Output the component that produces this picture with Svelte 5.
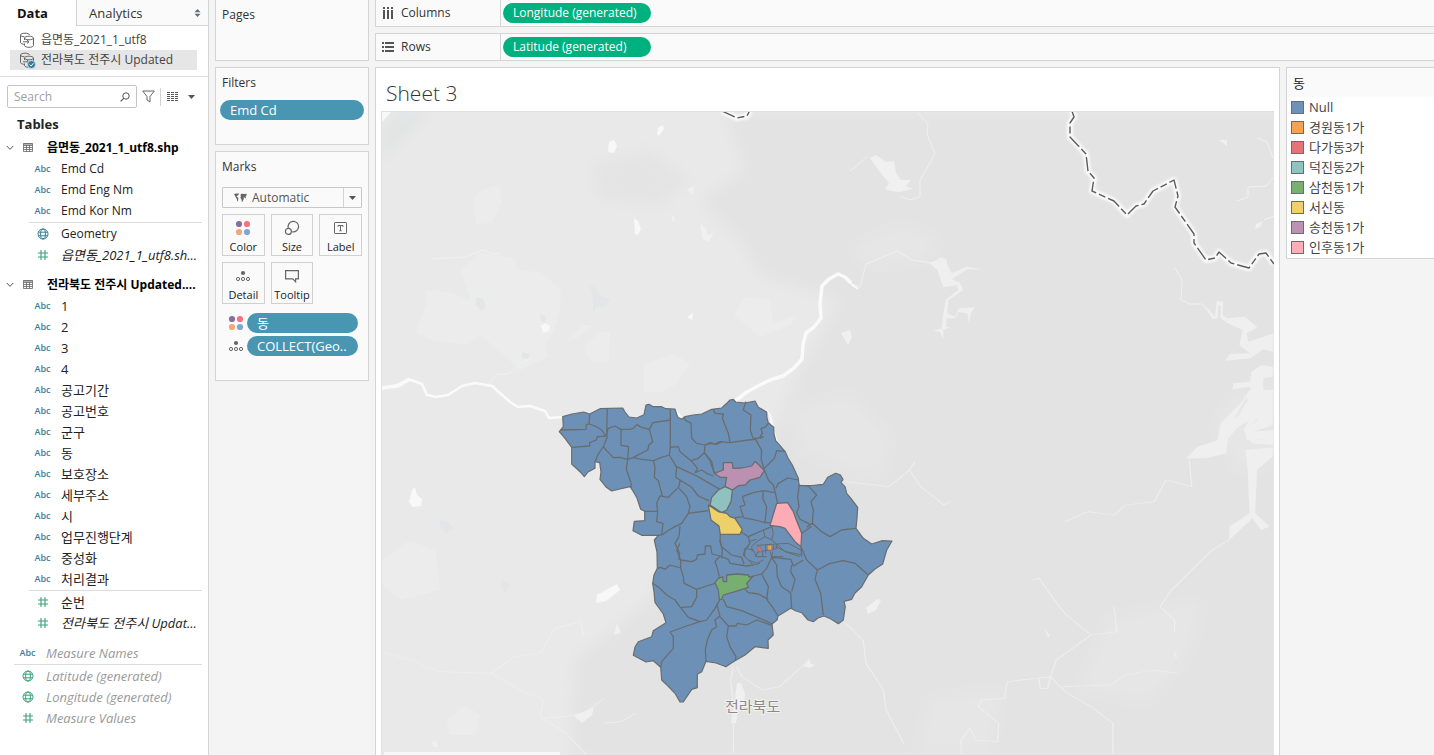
<script>
  const sources = [
    { name: '읍면동_2021_1_utf8', active: false },
    { name: '전라북도 전주시 Updated', active: true },
  ];

  const tables = [
    {
      name: '읍면동_2021_1_utf8.shp',
      dimensions: ['Emd Cd', 'Emd Eng Nm', 'Emd Kor Nm'],
      measures: [
        { kind: 'globe', tone: 'blue', name: 'Geometry' },
        { kind: 'hash', tone: 'green', name: '읍면동_2021_1_utf8.sh...', italic: true },
      ],
    },
    {
      name: '전라북도 전주시 Updated....',
      hangul: true,
      dimensions: ['1', '2', '3', '4', '공고기간', '공고번호', '군구', '동', '보호장소', '세부주소', '시', '업무진행단계', '중성화', '처리결과'],
      measures: [
        { kind: 'hash', tone: 'green', name: '순번' },
        { kind: 'hash', tone: 'green', name: '전라북도 전주시 Updat...', italic: true },
      ],
    },
  ];

  const generated = [
    { kind: 'globe', name: 'Latitude (generated)' },
    { kind: 'globe', name: 'Longitude (generated)' },
    { kind: 'hash', name: 'Measure Values' },
  ];

  const legend = [
    ['Null', '#6d91b8'],
    ['경원동1가', '#f5a252'],
    ['다가동3가', '#e67476'],
    ['덕진동2가', '#8fc3be'],
    ['삼천동1가', '#78b06f'],
    ['서신동', '#f0d169'],
    ['송천동1가', '#bd91b1'],
    ['인후동1가', '#ffadb6'],
  ];

  const third = 'scale(.33333)';
</script>

{#snippet globe()}
  <svg width="12" height="12" viewBox="0 0 12 12" fill="none" stroke="currentColor" aria-hidden="true">
    <circle cx="6" cy="6" r="5" /><ellipse cx="6" cy="6" rx="2.4" ry="5" /><path d="M1.5 4.2h9M1.5 7.8h9" />
  </svg>
{/snippet}

{#snippet hash()}
  <svg width="12" height="12" viewBox="0 0 12 12" fill="none" stroke="currentColor" stroke-width="1.1" aria-hidden="true">
    <path d="M4 1v10M8 1v10M1 4h10M1 8h10" />
  </svg>
{/snippet}

{#snippet fourDots()}
  <svg width="16" height="16" viewBox="0 0 16 16" aria-hidden="true">
    <circle cx="4" cy="4" r="3.1" fill="#8a7099" /><circle cx="12" cy="4" r="3.1" fill="#f9717f" />
    <circle cx="4" cy="12" r="3.1" fill="#f4a77c" /><circle cx="12" cy="12" r="3.1" fill="#82a6d0" />
  </svg>
{/snippet}

{#snippet detailDots()}
  <svg width="16" height="16" viewBox="0 0 16 16" aria-hidden="true">
    <circle cx="8" cy="5" r="2.1" fill="#666" />
    <g fill="none" stroke="#666"><circle cx="3" cy="11" r="1.6" /><circle cx="8" cy="11" r="1.6" /><circle cx="13" cy="11" r="1.6" /></g>
  </svg>
{/snippet}

<div class="workbook">
  <aside class="side">
    <div class="tabs">
      <button class="tab current">Data</button>
      <button class="tab">
        Analytics
        <svg width="7" height="8" viewBox="0 0 7 8" fill="#666b7a" aria-hidden="true"><path d="M3.5 0 6.5 3.2h-6zM.5 4.8h6L3.5 8z" /></svg>
      </button>
    </div>

    <ul class="sources">
      {#each sources as s}
        <li class:active={s.active}>
          <svg width="18" height="17" viewBox="0 0 18 17" fill="none" stroke="#666" aria-hidden="true">
            <path d="M6 12.5c-2.500-.3-4.500-1-4.500-2V3c0-1 2-1.800 4.500-1.800s4.500.8 4.500 1.800M1.500 3c0 1 1.800 1.700 4 1.800" />
            <path d="M5.500 8V6c0-1 2-1.800 4.500-1.800S14.500 5 14.500 6v7.500c0 1-2 1.800-4.500 1.800S5.500 14.500 5.500 13.500v-2M5.500 6c0 1 2 1.800 4.500 1.800s4.500-.8 4.500-1.800M4 9.800h5.500M8 8l2 1.800-2 1.800" />
            {#if s.active}
              <circle cx="12.500" cy="12.500" r="4" fill="#2f7ea3" stroke="#e6e6e6" stroke-width=".8" />
              <path d="m10.700 12.600 1.400 1.400 2.400-2.800" stroke="#fff" />
            {/if}
          </svg>
          <span>{s.name}</span>
        </li>
      {/each}
    </ul>

    <div class="tools">
      <label class="search">
        <input type="text" placeholder="Search" aria-label="Search" />
        <svg width="10" height="10" viewBox="0 0 10 10" fill="none" stroke="#555" aria-hidden="true"><circle cx="6" cy="4" r="3.200" /><path d="M3.700 6.300.6 9.400" stroke-width="1.200" /></svg>
      </label>
      <button aria-label="Filter fields">
        <svg width="13" height="13" viewBox="0 0 13 13" fill="none" stroke="#666" aria-hidden="true"><path d="M.7 1h11.600L8 6.500V12L5 10V6.500z" /></svg>
      </button>
      <button class="view" aria-label="View options">
        <svg width="12" height="10" viewBox="0 0 12 10" stroke="#555" aria-hidden="true"><path d="M0 .5h12M0 2.500h12M0 4.500h12M0 6.500h12M0 8.500h12" stroke-dasharray="3 1" /></svg>
        <svg width="7" height="4" viewBox="0 0 7 4" fill="#555" aria-hidden="true"><path d="M0 0h7L3.500 4z" /></svg>
      </button>
    </div>

    <h2>Tables</h2>

    {#each tables as t}
      <section class="table" class:hangul={t.hangul}>
        <h3>
          <svg width="8" height="6" viewBox="0 0 8 6" fill="none" stroke="#555" aria-hidden="true"><path d="m.8 1 3.200 3.400L7.200 1" /></svg>
          <svg width="10" height="9" viewBox="0 0 10 9" fill="none" stroke="#666" aria-hidden="true"><path d="M.5.5h9v8h-9zM.5 2.500h9M.5 4.500h9M.5 6.500h9M3.500 2v6.500M6.500 2v6.500" stroke-width=".8" /><path d="M.5 1h9" /></svg>
          <span>{t.name}</span>
        </h3>
        <ul>
          {#each t.dimensions as d}
            <li><i class="abc">Abc</i><span>{d}</span></li>
          {/each}
        </ul>
        <ul class="ruled">
          {#each t.measures as m}
            <li>
              <i class={m.tone}>{#if m.kind === 'globe'}{@render globe()}{:else}{@render hash()}{/if}</i>
              <span class:italic={m.italic}>{m.name}</span>
            </li>
          {/each}
        </ul>
      </section>
    {/each}

    <section class="table loose">
      <ul><li><i class="abc">Abc</i><span class="italic">Measure Names</span></li></ul>
      <ul class="ruled">
        {#each generated as g}
          <li>
            <i class="green">{#if g.kind === 'globe'}{@render globe()}{:else}{@render hash()}{/if}</i>
            <span class="italic">{g.name}</span>
          </li>
        {/each}
      </ul>
    </section>
  </aside>

  <div class="cards">
    <section class="card pages"><h4>Pages</h4></section>
    <section class="card filters">
      <h4>Filters</h4>
      <button class="pill blue-pill">Emd Cd</button>
    </section>
    <section class="card marks">
      <h4>Marks</h4>
      <div class="mark-type">
        <svg class="world" width="13" height="10" viewBox="0 0 13 10" fill="#666" aria-hidden="true"><path d="M0 1l2-.6 3 .2-.5 1.200L3.200 3l-.7.600L4.500 5 4 7.500l-.8 1.300L2.800 6 1.600 4 .8 2.400zM6.500 1.500 8 .5l1 .6L12.500.8l.2 1.500-1 .8.200 1.900-1 .3-.7-1.300-.8.300.6 1-1.200 3-.9.600-.4-2.500L6.500 5l.3-1.700z" /></svg>
        <select aria-label="Mark type"><option>Automatic</option></select>
        <svg class="caret" width="7" height="4" viewBox="0 0 7 4" fill="#555" aria-hidden="true"><path d="M0 0h7L3.500 4z" /></svg>
      </div>
      <div class="shelf-buttons">
        <button>{@render fourDots()}Color</button>
        <button>
          <svg width="16" height="16" viewBox="0 0 16 16" fill="none" stroke="#666" stroke-width="1.200" aria-hidden="true"><path d="M4.300 8.300A5.300 5.300 0 1 1 8.200 11.800" /><circle cx="4.400" cy="11.400" r="3" /></svg>
          Size
        </button>
        <button>
          <svg width="16" height="16" viewBox="0 0 16 16" fill="none" stroke="#666" aria-hidden="true"><rect x="1.500" y="2.500" width="12" height="11" rx=".6" /><path d="M5 6.800V5.500h5v1.300M7.500 5.500v5.300M6.300 10.700h2.400" /></svg>
          Label
        </button>
        <button>{@render detailDots()}Detail</button>
        <button>
          <svg width="16" height="16" viewBox="0 0 16 16" fill="none" stroke="#666" stroke-width="1.200" aria-hidden="true"><path d="M1.600 2.600h12.800v8.200h-2.800v3L8.800 10.800H1.600z" /></svg>
          Tooltip
        </button>
      </div>
      <div class="encoding">{@render fourDots()}<button class="pill blue-pill">동</button></div>
      <div class="encoding">{@render detailDots()}<button class="pill blue-pill">COLLECT(Geo..</button></div>
    </section>
  </div>

  <main>
    <div class="shelf columns">
      <h4>
        <svg width="12" height="12" viewBox="0 0 12 12" fill="#555" aria-hidden="true"><path d="M1 0h2v2H1zM5 0h2v2H5zM9 0h2v2H9zM1 3h2v9H1zM5 3h2v9H5zM9 3h2v9H9z" /></svg>
        Columns
      </h4>
      <button class="pill green-pill">Longitude (generated)</button>
    </div>
    <div class="shelf">
      <h4>
        <svg width="12" height="12" viewBox="0 0 12 12" fill="#555" aria-hidden="true"><path d="M0 1h2v2H0zM0 5h2v2H0zM0 9h2v2H0zM3 1h9v2H3zM3 5h9v2H3zM3 9h9v2H3z" /></svg>
        Rows
      </h4>
      <button class="pill green-pill">Latitude (generated)</button>
    </div>

    <div class="canvas">
      <section class="sheet">
        <h1>Sheet 3</h1>
        <div class="map">
          <svg viewBox="382 112 892 643" preserveAspectRatio="xMinYMin slice" role="img" aria-label="Map of districts">
            <defs>
              <filter id="soft" x="-20%" y="-20%" width="140%" height="140%"><feGaussianBlur stdDeviation="7" /></filter>
              <filter id="halo" x="-10%" y="-10%" width="120%" height="120%"><feGaussianBlur stdDeviation="1.200" /></filter>
            </defs>
            <rect x="382" y="112" width="892" height="643" fill="#e9e9e9" />

            <!-- terrain shading -->
            <g filter="url(#soft)">
              <path d="M725 112H1300V760H570L575 660 650 600 700 480 770 440 800 370 840 300 760 275 740 240 700 200 745 170z" fill="#e3e3e3" />
              <path d="M592 165 650 150 690 180 660 205 600 200z" fill="#e4e4e4" />
              <path d="M382 160 430 112H395L382 130z" fill="#e2e3e3" />
              <path d="M790 410 850 395 890 440 880 475 850 470 805 450zM850 250 900 225 940 240 920 260 870 265zM1080 690 1110 620 1200 600 1190 650 1150 700zM930 700 1000 690 990 750 920 750z" fill="#e6e6e6" />
              <path d="M1215 430 1230 400 1274 380V460L1240 470z" fill="#e6e6e6" />
            </g>

            <!-- woodland patches -->
            <g fill="#ececec">
              <path d="M477 192 499 185 502 202 492 222 476 225 474 200zM461 270 480 253 515 258 517 270 540 272 561 290 560 310 552 335 545 345 548 357 520 370 498 350 480 335 466 345 430 340 416 333 426 304 426 290 450 292 470 300z" />
              <path d="M567 340 583 325 593 325 578 338zM584 346 600 332 610 332 609 362 592 363zM644 364 675 354 690 364 675 385 662 392 644 392zM734 315 745 297 770 300 773 323 798 315 790 325 760 337z" />
              <path d="M382 560 410 540 435 550 440 590 400 600 382 585zM446 720 465 705 480 715 475 735 450 735z" />
            </g>
            <g fill="#e3e6e6">
              <path d="m590 285 6 3 4 8 10 3-4 7-10 1-3 7V297zM476 297l7 2 3 6-4 6-6-6zM400 113l12 2-2 8-8 5zM439 520l10 2 4 6-6 5-6-4zM502 580l8 4-4 9-6-8z" />
              <path d="M522 352l8 2-2 5-6-1zM540 314l6 3-1 6-4-2z" />
            </g>

            <!-- lakes -->
            <g fill="#f8f8f8">
              <path d="m658 128 5-3 1 4-5 7-2-2zM609 142l5-2 3 6-3 7-6-1zM634 218l4 3 3 8-3 6-3-1zM541 326l4-3 5 3-1 5-6 2zM687 317l6-4-1 7zM412 490l3-3 2 8 5 4-1 7-8 1-4-5zM597 595l20-11 3 6-14 11-10 2zM382 112h9l-9 10z" />
            </g>
            <g fill="#f0f0f0">
              <path d="m700 223 6 6 2 6 6-2-6 9-6-4zM671 214l4 4-2 5zM687 189l7-3-1 9zM841 333l9-3 2 7-4 8zM870 158l6-3 10 7 8-1 2 12 5 7 10 0-5 6 7 3-14 3-8-1-6-2 4-6-10-12z" />
              <path d="M1219 140h8v6zM1256 224l7-3-3 6-5 2zM803 666l6-7 2 5 4 1-5 3zM866 608l11-9 4 1-5 10-8 4zM737 683l4 0 4 10-1 10-6 8-2 12-5 0 4-25zM574 716l20-9-2 8-10 8zM614 635l3-12 4 10zM431 742l5-1 2 6-4 0zM1044 628l6 8-2 1zM1174 650l3 8-3-2z" />
            </g>

            <!-- reservoir in the north-east -->
            <g transform="translate(850 100) {third}" fill="#efefef">
              <path d="M238 490 275 472 290 480 292 495 305 520 350 500 398 508 352 508 305 538 330 548 340 570 295 600 292 640 315 650 325 625 375 622 362 640 358 672 352 640 325 636 315 655 290 655 288 680 298 682 280 690 280 718 270 696 250 692 275 685 280 640 288 598 325 570 320 556 280 562 262 510z" />
              <path d="M1065 615 1095 650 1100 602 1120 605 1118 645 1130 655 1185 650 1222 682 1190 700 1195 725 1270 700V755L1240 748 1200 775 1125 782 1140 762 1200 760 1168 735 1178 690 1130 668 1112 655 1112 618 1105 615 1103 655 1088 658z" />
              <path d="M1270 802 1235 795 1205 815 1200 845 1150 850 1148 868 1200 860 1205 890 1180 920 1168 945 1140 965 1118 978 1128 1000 1105 1000 1130 1020 1165 980 1200 960 1215 940 1222 960 1185 990 1190 1020 1270 1018 1270 990 1210 995 1268 975 1268 935 1240 890 1240 835 1268 830z" />
            </g>
            <g transform="translate(376 390) scale(.57654 .33333)" fill="#efefef">
              <path d="M1515 0H1556V60L1530 80 1512 120 1530 150 1556 145V165L1520 160 1505 120 1520 70 1510 20 1480 110 1475 190 1440 205 1405 205 1425 170 1460 150 1465 100 1500 40zM1508 180 1556 172 1555 200 1528 240 1525 370 1550 410 1535 420 1520 385 1480 450 1480 410 1515 370 1512 240z" />
            </g>

            <!-- streams -->
            <g fill="none" stroke="#f1f1f1" stroke-width="1">
              <path d="M431 259 465 257 483 250 493 254 500 253M488 385 497 374H509L520 364 531 358M850 171 868 156M918 113 928 124 927 134 935 154 920 180V197L910 200 900 196M850 283 860 287 866 264 897 251 912 260 933 263M1175 268 1182 280 1181 300 1190 304 1202 304 1213 318M1257 138 1267 142 1273 158M1237 201 1248 197V187L1266 186 1273 178M1274 216 1264 220" />
            </g>
            <g transform="translate(376 390) scale(.57654 .33333)" fill="none" stroke="#efefef" stroke-width="2">
              <path d="M10 785 60 810 110 845 200 850 240 800 285 790 310 715 355 695 360 740M200 850 250 900 290 930 285 980 330 1030 365 1095M285 985 330 980 365 965 395 925M395 1000 425 995 450 970M620 830 615 870 620 950 620 1090M625 830 635 860 670 900 700 890 745 820M815 700 845 750 850 820 880 900 885 960 915 1060M815 275 890 290 925 240 935 215M925 240 945 290 985 345 995 335M1195 395 1235 365 1280 375 1300 345 1350 335 1370 270 1415 290 1410 200M1480 450 1450 480 1380 600 1360 650 1385 690V725M1135 570 1150 565 1185 650 1195 670 1215 700 1240 735 1285 725 1280 650M1240 735 1180 810 1170 860 1095 875 1090 925 1050 930 1045 950 1080 1000 1078 1055 1040 1050 1030 1015 1015 1050 1015 1090M1170 860 1195 905 1240 950 1278 1000 1278 1090M1190 890 1275 885 1300 855 1345 840 1390 850M1150 865 1152 895 1165 895 1170 860" />
            </g>

            <!-- rivers -->
            <g fill="none" stroke="#fafafa" stroke-width="3.500" stroke-linejoin="round">
              <path d="M382 388 398 385 408 379 422 384 427 395 436 397 448 395 462 386 475 383 492 386 501 394 510 402 518 407 530 406 545 411 549 418 563 417" stroke-width="2.500" />
              <path d="M382 388 398 386 410 379M735 401 747 392 758 386 770 380 783 376 794 368 802 359 803 345 806 333 814 327 821 318 820 303 822 286 829 279 838 274 845 277 851 283" />
              <path d="M851 284 858 289M800 484 776 440 770 415 766 410M675 410 681 417" stroke-width="2" />
            </g>

            <!-- provincial boundary -->
            <g fill="none" stroke-linejoin="round">
              <g stroke="#fafafa" stroke-width="6" filter="url(#halo)">
                <path d="M722 111 737 118 747 116 750 110" />
                <path d="M1072 111 1074 117 1070 123V137L1086 154 1088 171 1094 178 1092 191 1114 201 1127 215 1136 206 1144 204 1153 191 1174 180 1178 196 1175 207 1194 234V243L1206 260 1215 258 1219 252 1231 263 1249 268 1259 254 1266 253 1274 264" />
              </g>
              <g stroke="#5c5c5c" stroke-width="1.400" stroke-dasharray="14 3 7 3">
                <path d="M722 111 737 118 747 116 750 110" />
                <path d="M1072 111 1074 117 1070 123V137L1086 154 1088 171 1094 178 1092 191 1114 201 1127 215 1136 206 1144 204 1153 191 1174 180 1178 196 1175 207 1194 234V243L1206 260 1215 258 1219 252 1231 263 1249 268 1259 254 1266 253 1274 264" />
              </g>
            </g>

            <!-- city outline -->
            <path
              fill="#6d90b6" stroke="#686d70" stroke-width="1.200" stroke-linejoin="round"
              d="M562.700 416.700 572 414 583.700 412 589.700 414 600 408.700 622.700 408 625 412 629 417 636.700 418 644 414.700 646 405 649 404.300 653.300 406.700 661.700 406.700 665.700 408.700 675 409 677.700 417.300 681.700 419.300 685 416.700 693 415 701.700 414 711.700 409.300 721.700 408 726.700 403.300 730 400 733.300 399.300 735.700 402 745 403 755 401 758.300 407.300 766.700 412 767 418 768.300 422.700 773.700 427.300 774 434 775.700 440.700 785 451.300 788 458 792.300 465 798.300 478.300 799.300 485.300 812 485.500 823.300 484.300 827.700 477.300 835.700 473.300 840 474.700 843 479.300 841 482.700 845 486.700 846.700 493.300 851.700 499.300 857.700 507.300 857 518 856 528.300 863.300 538.300 871.700 544 881.700 540.700 892 541 886.700 550 882.700 564 875 569 868.300 575 861.700 586.700 855 593 851.700 599.300 844 601.300 845.300 606.700 843.300 620 838.300 623.700 831 619 824 616 818 618 813.300 621.700 808 620 801.700 612.700 796 611 790.700 608.300 778 616 777 620 772 624 773.300 635 768 640 768.300 648.300 755 646.700 745 655 735 660.700 731 663.300 726 666.700 716 663 706 661.300 701.700 671.700 697.300 674.300 697.300 687.700 691.700 689.300 683.300 702 680 702 675 693.300 668 686 661.700 680 660.700 667.300 653.300 660.700 646 662 633.300 655.300 635 647 638.300 641.700 651.700 636.700 653.300 630.700 666 622.700 663.300 614 655 602.300 654 592 652.700 583.300 654 575 657.300 568.300 657 552 654.300 540 658.300 535.300 641.700 535.300 633 530.700 634.300 521.300 644.700 520.700 644.700 511.300 640.700 509.300 637 498 632.300 490 630 486.700 620 489 611.700 491 606 487 600 479.300 601 472 599.700 462.700 595 461.700 595 468.300 588 472 584.300 476.700 580 471.700 571.700 464 571.700 447.300 565 438.300 559.300 431.700 563.300 426.700z"
            />

            <!-- inner district borders -->
            <g fill="none" stroke="#686d70" stroke-width="3.800" stroke-linejoin="round">
              <g transform="translate(545 390) {third}">
                <path d="M46 120 123 118 124 104 132 102 134 72M132 102 150 108 170 120 180 134 187 138M80 172 134 168V158L154 150 157 140 188 138M187 55 185 138 189 115 210 108 228 118 252 118 265 115 275 104 290 112 313 118 324 98 376 90M228 118V166L251 170 248 208M313 118 323 155 312 165 308 180 265 202M376 57V172L373 195 350 202 325 212 290 208 265 203 248 208 225 202 205 203 185 182 175 170 187 140M175 170 160 192 150 215M248 208 244 238 257 275 260 292M325 212 330 230 328 262 340 272 352 318M376 172 400 170 405 185 438 212 458 235 450 248" />
                <path d="M373 195 395 232 392 262 405 270 402 290 370 322 345 318 335 340 338 364 299 364M395 230 420 242 450 255 525 298M405 270 440 292 460 318 492 332M402 295 425 320 435 350 430 370 410 400 380 415 354 433 340 436M338 364 335 395 354 400 350 436M430 370 460 366 490 362M418 80 420 90 438 100 440 145 455 160 480 165 478 188 460 205 438 212M480 165 500 160 515 163 530 156M478 188 495 212 505 242 508 250M450 248 470 240 485 250 505 258M405 408 402 440 390 460 404 490 402 510" />
              </g>
              <g transform="translate(705 390) {third}">
                <path d="M25 58 30 70 55 72 52 85 62 110 70 130 75 158M0 165 15 158 30 162 45 155 75 158 130 150 152 148 148 142M122 35 115 60 138 75 136 120 145 148 175 140 165 145M190 100 180 112 168 115 172 130 162 145M152 148 170 182 168 205 178 240 190 270 205 285 210 305 218 340M240 184 215 182 208 205 178 235M0 190 20 215 28 250M212 295 220 280 248 264 280 270M112 320 145 308 175 302 210 308M112 320 120 345 105 350 115 380 90 383M175 302 173 325 185 350 180 398 150 390 115 384M180 398 198 398M283 286 278 320 282 350 275 368 285 388 310 400 318 410 290 430M283 286 310 288 335 315 318 335 325 360 322 400 350 425 375 440 410 420 453 415M322 400 305 412M288 470 290 500M46 434 45 455 52 480 50 505M108 425 130 440 175 420 200 410M130 440 135 460 120 480 118 500" />
                <path stroke-width="3" d="M175 420 180 440 155 455 140 470 142 485M200 408 205 430 200 450 215 462 250 460 288 480M180 440 200 450M155 466 215 462V476L158 486M182 465V490M207 465 204 480M173 485V500M215 462 240 485 285 500M160 486 150 500M130 455 155 448M195 484 200 500 235 500" />
              </g>
              <g transform="translate(620 540) {third}">
                <path d="M112 85 122 82 135 88 150 75 182 84 182 60 170 30 180 10M182 60 215 65 230 58 232 45 255 42 256 18 272 18 276 42 300 48 285 65 292 85 298 110M182 84 190 110 192 130 230 148 230 172 215 200 182 203 165 180 140 165 120 145 98 130M182 203 205 232 240 245 260 240 285 205 300 178M230 148 260 138 285 130M300 48 325 58 330 70 380 78 400 75M300 0 305 20 335 45 365 52 372 72M310 178 320 200 365 212 420 235 458 252M290 190 300 230 325 258 348 258 352 250 380 255 410 240 456 256M325 258 320 290 330 320 348 350 345 362M300 228 285 240 290 260 275 270 262 300 256 330 258 364M240 245 200 258 150 276 160 290 160 325 125 365 122 382M375 148 385 158 415 162 445 178M400 108 425 102 440 85 455 52M425 102 445 140 440 178 460 205 474 228M455 52 470 75 472 110 485 140 512 158 515 205M515 75 512 95 525 118 515 155M455 52 512 58 520 78 550 60M545 25 560 60 592 90 585 118 602 160 610 225M592 90 630 70 670 62 705 70 745 105" />
                <path stroke-width="3" d="M370 45 385 60 410 70 430 60M400 30 410 50 440 50M385 60 400 75 420 70M370 45 375 25 400 30M458 34 455 52M465 20 500 35 545 45" />
              </g>
            </g>

            <!-- highlighted districts -->
            <g stroke="#686d70" stroke-width="3.800" stroke-linejoin="round">
              <g transform="translate(705 390) {third}">
                <path fill="#bb90b1" d="M28 250 55 240V218L82 218 84 235 110 234 140 228 150 214 165 228 178 242 165 262 135 270 120 285 100 287 82 300 60 290 65 262 45 262z" />
                <path fill="#8fc2bf" d="M60 290 82 300 78 335 65 360 50 368 15 345 20 322 40 300z" />
                <path fill="#edd069" d="M10 345 42 366 65 370 75 380 90 385 112 418 105 433 46 433 42 408 18 390z" />
                <path fill="#fdabb5" d="M215 340 248 338 265 365 272 385 290 430 288 470 270 455 240 415 225 410 195 406z" />
                <path fill="#f2a04c" d="M188 466h12v14h-12z" stroke-width="1" />
                <path fill="#e46c6c" d="M157 470 166 470 170 486 160 484z" stroke-width="1" />
              </g>
              <g transform="translate(620 540) {third}">
                <path fill="#77af70" d="M285 128 295 115 308 110 310 125 320 125 320 105 350 102 385 105 388 112 400 108 380 130 385 142 345 155 310 165 305 178 298 178 295 150z" />
              </g>
            </g>

            <text x="725" y="712" class="place">전라북도</text>
            <rect x="384" y="752" width="176" height="3" fill="#f7f7f7" />
          </svg>
        </div>
      </section>

      <section class="legend">
        <h4>동</h4>
        <ul>
          {#each legend as [name, color]}
            <li><b style="background:{color}"></b>{name}</li>
          {/each}
        </ul>
      </section>
    </div>
  </main>
</div>

<style>
  :global(body) {
    margin: 0;
    background: #f4f4f4;
  }
  .workbook {
    display: flex;
    height: 100vh;
    overflow: hidden;
    font: 12px/20px "Open Sans", "Noto Sans CJK KR", sans-serif;
    color: #333;
  }
  .workbook * {
    box-sizing: border-box;
  }
  ul,
  h1,
  h2,
  h3,
  h4 {
    margin: 0;
    padding: 0;
    list-style: none;
    font-weight: 400;
  }
  button,
  input,
  select {
    font: inherit;
    color: inherit;
    border: 0;
    padding: 0;
    background: none;
  }
  svg {
    flex: none;
    display: block;
  }

  /* data pane */
  .side {
    flex: none;
    width: 209px;
    background: #fff;
    border-right: 1px solid #d4d4d4;
    overflow: hidden;
  }
  .tabs {
    display: flex;
    height: 26px;
    font-size: 13px;
  }
  .tab {
    flex: 1;
    display: flex;
    align-items: center;
    justify-content: space-between;
    padding: 0 7px 0 12px;
    background: #fafafa;
    border: solid #d4d4d4;
    border-width: 0 0 1px 1px;
  }
  .tab.current {
    flex: none;
    width: 76px;
    padding-left: 17px;
    background: #fff;
    border: 0;
    color: #111;
    font-weight: 700;
  }
  .sources {
    padding: 4px 11px 6px 10px;
    border-bottom: 1px solid #e0e0e0;
    color: #444;
  }
  .sources li {
    display: flex;
    align-items: center;
    gap: 4px;
    height: 20px;
    padding-left: 9px;
    white-space: nowrap;
  }
  .sources .active {
    background: #e6e6e6;
  }
  .tools {
    display: flex;
    align-items: center;
    gap: 5px;
    padding: 8px 13px 0 7px;
  }
  .search {
    display: flex;
    align-items: center;
    width: 130px;
    height: 23px;
    padding: 0 6px;
    border: 1px solid #c4c4c4;
    border-radius: 2px;
  }
  .search input {
    flex: 1;
    min-width: 0;
    outline: 0;
  }
  .search input::placeholder {
    color: #a0a0a0;
  }
  .view {
    display: flex;
    align-items: center;
    gap: 9px;
    height: 18px;
    padding-left: 6px;
    border-left: 1px solid #d4d4d4;
  }
  h2 {
    padding: 6px 17px 1px;
    font-size: 13px;
    font-weight: 700;
    color: #222;
    line-height: 20px;
  }
  .table {
    padding: 2px 6px 7px 0;
    color: #222;
  }
  h3 {
    display: flex;
    align-items: center;
    gap: 9px;
    height: 21px;
    padding-left: 6px;
    font-size: 12px;
    font-weight: 700;
    color: #000;
    white-space: nowrap;
  }
  h3 span {
    padding-left: 5px;
  }
  .table ul {
    margin-left: 29px;
  }
  .table li {
    display: flex;
    align-items: center;
    gap: 5px;
    height: 21px;
    white-space: nowrap;
  }
  .hangul li {
    font-size: 13px;
  }
  .table i {
    display: flex;
    justify-content: center;
    width: 27px;
    font-style: normal;
  }
  .table .ruled {
    margin-top: 1px;
    border-top: 1px solid #dcdcdc;
  }
  .table .abc {
    font: 600 9px/12px "Open Sans", sans-serif;
    color: #3a7d99;
  }
  .blue {
    color: #3a7d99;
  }
  .green {
    color: #3aa27a;
  }
  .italic {
    font-size: 13px;
    font-style: italic;
  }
  .loose.table ul {
    margin-left: 14px;
  }
  .loose {
    color: #999;
  }

  /* cards */
  .cards {
    flex: none;
    display: flex;
    flex-direction: column;
    gap: 6px;
    width: 154px;
    margin: 0 6px;
  }
  .card {
    padding: 5px 6px;
    background: #fafafa;
    border: 1px solid #d4d4d4;
  }
  .pages {
    height: 61px;
    border-top: 0;
  }
  .filters {
    height: 78px;
    padding: 5px 4px;
  }
  .marks {
    height: 230px;
  }
  .filters h4 {
    padding: 0 2px;
  }
  .pill {
    display: block;
    width: 100%;
    height: 20px;
    padding: 0 10px;
    border-radius: 10px;
    color: #fff;
    font-weight: 500;
    line-height: 20px;
    text-align: left;
    white-space: nowrap;
  }
  .blue-pill {
    background: #4996b2;
    font-size: 13px;
    font-weight: 400;
  }
  .green-pill {
    width: 148px;
    background: #00b180;
  }
  .filters .pill {
    margin-top: 7px;
  }
  .mark-type {
    display: grid;
    grid-template-columns: 11px 19px 1fr 18px;
    align-items: center;
    height: 21px;
    margin-top: 10px;
    border: 1px solid #c8c8c8;
    border-radius: 1px;
    color: #555;
  }
  .world {
    grid-area: 1 / 2;
  }
  .mark-type select {
    grid-area: 1 / 1 / 2 / 5;
    height: 19px;
    padding-left: 29px;
    appearance: none;
  }
  .caret {
    grid-area: 1 / 4;
    box-sizing: content-box !important;
    padding: 8px 5px 7px;
    border-left: 1px solid #d4d4d4;
    pointer-events: none;
  }
  .shelf-buttons {
    display: grid;
    grid-template-columns: repeat(3, 1fr);
    gap: 6px;
    margin: 6px 0 9px;
  }
  .shelf-buttons button {
    display: flex;
    flex-direction: column;
    align-items: center;
    gap: 3px;
    min-width: 0;
    height: 42px;
    padding-top: 5px;
    border: 1px solid #d0d0d0;
    color: #222;
    font-size: 11px;
    line-height: 16px;
  }
  .encoding {
    display: flex;
    align-items: center;
    gap: 3px;
    margin: 0 4px 3px 6px;
  }
  .encoding .pill {
    flex: 1;
    width: auto;
  }

  /* shelves and sheet */
  main {
    flex: 1;
    display: flex;
    flex-direction: column;
    gap: 6px;
    min-width: 0;
  }
  .shelf {
    display: flex;
    align-items: center;
    gap: 2px;
    height: 28px;
    background: #fafafa;
    border: solid #d4d4d4;
    border-width: 1px 0 1px 1px;
  }
  .shelf.columns {
    height: 27px;
    border-top: 0;
  }
  .shelf h4 {
    display: flex;
    align-items: center;
    gap: 7px;
    width: 125px;
    height: 100%;
    padding-left: 6px;
    border-right: 1px solid #d4d4d4;
  }
  .canvas {
    flex: 1;
    display: flex;
    align-items: flex-start;
    gap: 6px;
    min-height: 0;
  }
  .sheet {
    flex: 1;
    display: flex;
    flex-direction: column;
    align-self: stretch;
    min-width: 0;
    padding: 0 5px;
    background: #fff;
    border: 1px solid #d4d4d4;
    border-bottom: 0;
  }
  h1 {
    padding: 11px 5px 4px;
    font-size: 21px;
    font-weight: 300;
    line-height: 28px;
  }
  .map {
    flex: 1;
    min-height: 0;
    border: solid #e0e0e0;
    border-width: 1px 0 0 1px;
  }
  .map svg {
    width: 100%;
    height: 100%;
  }
  .place {
    font: 15px "Noto Sans CJK KR", sans-serif;
    fill: #8a8a8a;
    stroke: #f2f2f2;
    stroke-width: 2px;
    paint-order: stroke;
  }
  .legend {
    width: 148px;
    padding-bottom: 1px;
    background: #fff;
    border: solid #d4d4d4;
    border-width: 1px 0 1px 1px;
    color: #444;
    font-size: 13px;
  }
  .legend h4 {
    height: 29px;
    padding: 5px 6px;
    background: #fafafa;
    color: #222;
  }
  .legend li {
    display: flex;
    align-items: center;
    gap: 5px;
    height: 20px;
    padding-left: 4px;
  }
  .legend b {
    width: 13px;
    height: 13px;
    border: 1px solid #686d70;
  }
</style>
